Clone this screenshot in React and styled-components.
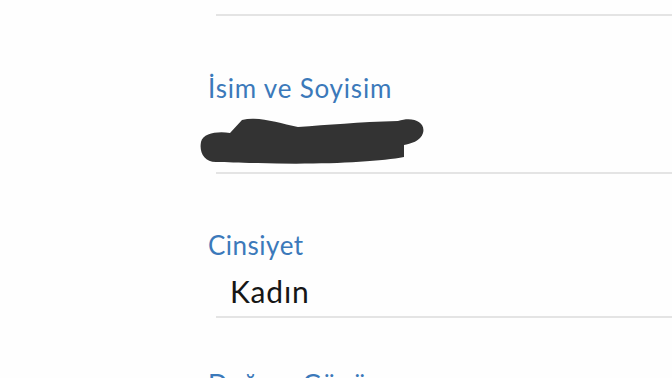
import React from "react"
import styled, { createGlobalStyle } from "styled-components"

const GlobalStyle = createGlobalStyle`
html, body {
  margin: 0;
  padding: 0;
  background: #ffffff;
  overflow: hidden;
}
body {
  font-family: Lato, "Open Sans", sans-serif;
}
`

const Page = styled.div`
width: 672px;
height: 378px;
overflow: hidden;
background: #fefefe;
padding-left: 208px;
box-sizing: border-box;
`

const Divider = styled.div`
height: 2px;
margin-left: 8px;
margin-top: ${p => p.top || 0}px;
background: #e4e4e4;
`

const Label = styled.div`
color: #3b79ba;
font-size: 26px;
line-height: 31px;
letter-spacing: ${p => p.spacing || 0.7}px;
margin-top: ${p => p.top || 0}px;
white-space: nowrap;
`

const Value = styled.div`
color: #161616;
font-size: 30px;
line-height: 36px;
letter-spacing: 0.8px;
padding-left: 22px;
margin-top: ${p => p.top || 0}px;
`

const Scribble = styled.svg`
display: block;
margin-left: -10px;
margin-top: ${p => p.top || 0}px;
`

function Redacted() {
    return (
        <Scribble top={6} width="230" height="56" viewBox="0 0 230 56">
            <path
                fill="#333333"
                d="M3 32 C 5 23, 20 21, 32 23 L 44 10 C 60 6, 80 13, 100 17 C 130 15, 160 12, 200 11 C 215 6, 228 12, 225 23 C 223 31, 212 34, 206 35 L 206 47 C 180 52, 120 55, 60 53 C 40 53, 30 52, 18 52 C 6 52, 1 42, 3 32 Z"
            />
        </Scribble>
    )
}

function App() {
    return (
        <>
            <GlobalStyle />
            <Page>
                <Divider top={14} />
                <Label top={57} spacing={0.8}>İsim ve Soyisim</Label>
                <Redacted />
                <Divider top={6} />
                <Label top={56} spacing={0.5}>Cinsiyet</Label>
                <Value top={12}>Kadın</Value>
                <Divider top={7} />
                <Label top={51}>Doğum Günü</Label>
            </Page>
        </>
    )
}

export default App
